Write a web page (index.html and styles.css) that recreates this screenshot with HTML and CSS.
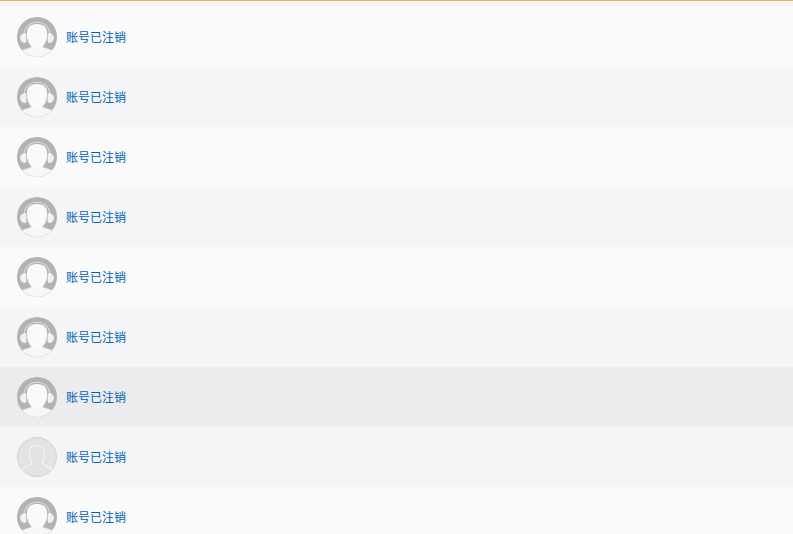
FILE: index.html
```html
<!DOCTYPE html>
<html lang="zh">
<head>
<meta charset="utf-8">
<title>账号已注销</title>
<link rel="stylesheet" href="styles.css">
</head>
<body>
<svg class="defs" width="0" height="0" aria-hidden="true">
  <defs>
    <symbol id="agent" viewBox="0 0 40 40">
      <circle cx="20" cy="20" r="20" fill="#b2b2b2"/>
      <path d="M5.200 33.400C9 31.500 12 31.300 14.500 30L25.500 30C28 31.300 31 31.500 34.800 33.400A19.700 19.700 0 0 1 5.200 33.400Z" fill="#f7f7f7" stroke="#dedede" stroke-width="0.500"/>
      <path d="M7 19C7 10.500 12.500 5.300 20 5.300S33 10.500 33 19" fill="none" stroke="#dcdcdc" stroke-width="1.100"/>
      <path d="M7.500 16C4.800 16.500 3 18.500 3 21S4.800 25.800 7.500 26C8.800 26.100 9.600 25 9.500 23.500L9.200 17.500C9.100 16.500 8.500 15.800 7.500 16Z" fill="#f1f1f1"/>
      <path d="M32.500 16C35.200 16.500 37 18.500 37 21S35.200 25.800 32.500 26C31.200 26.100 30.400 25 30.500 23.500L30.800 17.500C30.900 16.500 31.500 15.800 32.500 16Z" fill="#f1f1f1"/>
      <path d="M20 7C12.500 7 9.800 11 9.800 17C9.800 25 14.500 32.500 20 32.500S30.200 25 30.200 17C30.200 11 27.500 7 20 7Z" fill="#fafafa"/>
    </symbol>
    <symbol id="ghost" viewBox="0 0 40 40">
      <circle cx="20" cy="20" r="19.500" fill="#e3e3e3" stroke="#d2d2d2"/>
      <path d="M5 32.500C8.500 29 14 28.500 15 26C13 23.500 12.300 19.500 12.300 16C12.300 11 15.500 8.300 20 8.300S27.700 11 27.700 16C27.700 19.500 27 23.500 25 26C26 28.500 31.500 29 35 32.500" fill="none" stroke="#f3f3f3" stroke-width="1.200"/>
    </symbol>
  </defs>
</svg>
<ul class="list">
  <li class="row"><svg class="avatar"><use href="#agent"/></svg><a class="name">账号已注销</a></li>
  <li class="row alt"><svg class="avatar"><use href="#agent"/></svg><a class="name">账号已注销</a></li>
  <li class="row"><svg class="avatar"><use href="#agent"/></svg><a class="name">账号已注销</a></li>
  <li class="row alt"><svg class="avatar"><use href="#agent"/></svg><a class="name">账号已注销</a></li>
  <li class="row"><svg class="avatar"><use href="#agent"/></svg><a class="name">账号已注销</a></li>
  <li class="row alt"><svg class="avatar"><use href="#agent"/></svg><a class="name">账号已注销</a></li>
  <li class="row hover"><svg class="avatar"><use href="#agent"/></svg><a class="name">账号已注销</a></li>
  <li class="row alt"><svg class="avatar"><use href="#ghost"/></svg><a class="name">账号已注销</a></li>
  <li class="row"><svg class="avatar"><use href="#agent"/></svg><a class="name">账号已注销</a></li>
</ul>
</body>
</html>
```
FILE: styles.css
```css
html, body {
  margin: 0;
  padding: 0;
  height: 100%;
  overflow: hidden;
  background: #fafafa;
}
body {
  font-family: "Noto Sans CJK SC", "Liberation Sans", sans-serif;
  font-size: 12px;
}
.defs {
  display: block;
  height: 0;
}
.list {
  list-style: none;
  margin: 0;
  padding: 6px 0 0;
  background: #f4f5f7;
  border-top: 1px solid #f2b35f;
}
.row {
  display: flex;
  align-items: center;
  gap: 9px;
  height: 60px;
  padding-left: 17px;
  background: #fafafa;
}
.alt {
  background: #f4f5f7;
}
.hover {
  background: #ebecee;
}
.avatar {
  width: 40px;
  height: 40px;
  flex: none;
}
.name {
  color: #0064b8;
  line-height: 20px;
}
```
